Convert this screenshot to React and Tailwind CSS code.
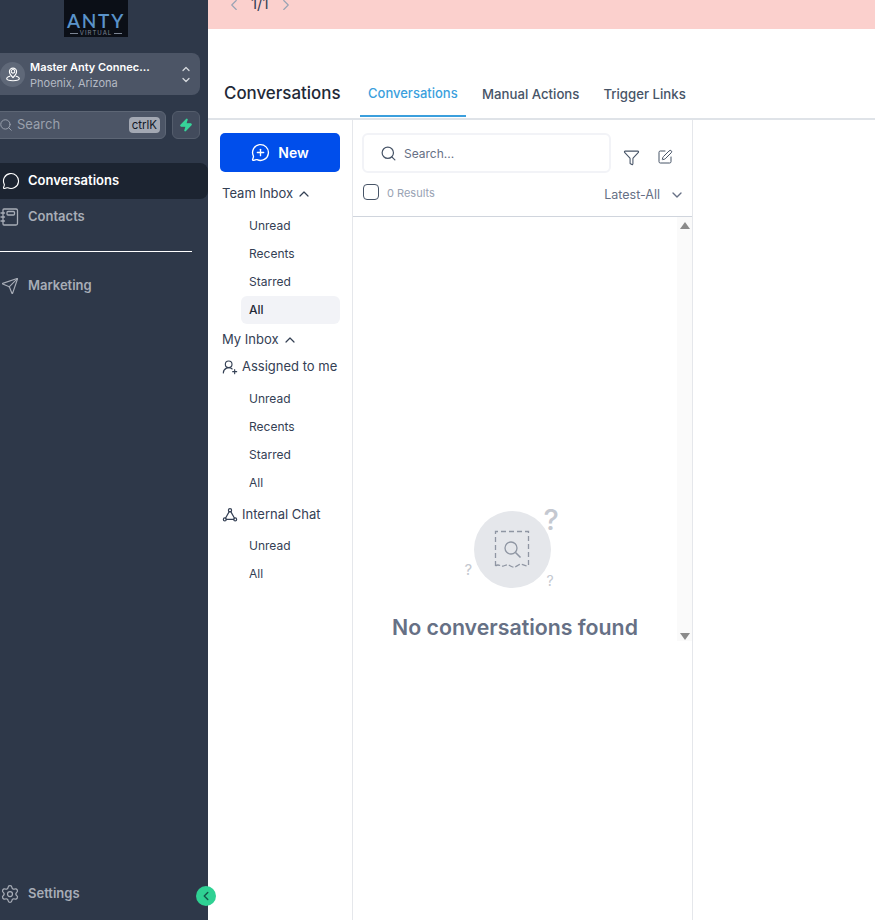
import { ChevronLeft, ChevronRight, ChevronUp, ChevronDown, Search, Zap, MessageCircle, Send, Settings, MessageCirclePlus, Funnel, SquarePen, UserRoundPlus } from 'lucide-react';

const ContactsIcon = ({ className }) => (
    <svg viewBox="0 0 20 20" fill="none" stroke="currentColor" strokeWidth="1.3" strokeLinecap="round" strokeLinejoin="round" className={className}>
        <path d="M4 2h12a1.500 1.500 0 0 1 1.500 1.500v13a1.500 1.500 0 0 1-1.500 1.500h-12a1 1 0 0 1-1-1v-14a1 1 0 0 1 1-1z" />
        <rect x="7" y="4.500" width="7.500" height="3.500" rx="1" />
        <path d="M1 6h3.500M1 10h3.500M1 14h3.500" />
    </svg>
);

const LocationIcon = ({ className }) => (
    <svg viewBox="0 0 20 20" fill="none" stroke="currentColor" strokeWidth="1.200" strokeLinecap="round" strokeLinejoin="round" className={className}>
        <circle cx="10" cy="7" r="2" />
        <path d="M10 14c-2-2-4-3.800-4-6.500a4 4 0 0 1 8 0c0 2.700-2 4.500-4 6.500z" />
        <path d="M6.500 12.500c-2 .5-3.500 1.400-3.500 2.500 0 1.400 3 2.500 7 2.500s7-1.100 7-2.500c0-1.100-1.500-2-3.500-2.500" />
    </svg>
);

const ChatNodesIcon = ({ className }) => (
    <svg viewBox="0 0 20 20" fill="none" stroke="currentColor" strokeWidth="1.500" strokeLinecap="round" strokeLinejoin="round" className={className}>
        <circle cx="10" cy="4" r="2" />
        <circle cx="3.500" cy="15.500" r="1.800" />
        <circle cx="16.500" cy="15.500" r="1.800" />
        <path d="M9 5.800 4.500 13.800M11 5.800l4.500 8M5.300 15.500h9.400" />
    </svg>
);

const EmptyIllustration = () => (
    <div className="relative w-[100px] h-[84px]">
        <div className="absolute left-[10px] top-[3px] w-[77px] h-[77px] rounded-full bg-[#e5e7eb]" />
        <svg viewBox="0 0 36 39" fill="none" className="absolute left-[30px] top-[22px] w-[36px] h-[39px] text-[#8f96a3]" stroke="currentColor" strokeWidth="1.300">
            <path d="M1.500 36V1.500h33V36" strokeDasharray="5 3" />
            <path d="M1.500 36c3-3 5 1 8 0s4-2 7 0 5 1 8-1 6 1 10 1" strokeDasharray="5 2" />
            <circle cx="17" cy="18" r="6" />
            <path d="m21.500 22.500 5 5" strokeWidth="1.600" />
        </svg>
        <span className="absolute left-[80px] -top-[3px] text-[29px] leading-none font-medium text-[#c4c8d0]">?</span>
        <span className="absolute left-[1px] top-[54px] text-[15px] leading-none text-[#c4c8d0]">?</span>
        <span className="absolute left-[83px] top-[66px] text-[14px] leading-none text-[#c4c8d0]">?</span>
    </div>
);

const SubItem = ({ label, active }) => (
    <div className={`ml-[33px] w-[99px] h-[28px] pl-[8px] flex items-center text-[12px] rounded-md ${active ? 'bg-[#f2f3f7] text-[#1f2937] font-medium' : 'text-[#344054]'}`}>
        {label}
    </div>
);

const Sidebar = () => (
    <aside className="relative w-[208px] shrink-0 h-[920px] bg-[#2e3849] flex flex-col">
        <div className="ml-[64px] w-[64px] h-[37px] bg-[#0b0f17] flex flex-col items-center overflow-hidden">
            <span className="mt-[11px] h-[19px] text-[19px] leading-[19px] font-semibold tracking-[1.800px] text-[#5a93c9]" style={{ fontFamily: 'Lato, sans-serif' }}>ANTY</span>
            <div className="flex items-center gap-[2px]">
                <span className="w-[8px] border-t border-[#7b8494]" />
                <span className="text-[6px] leading-[6px] tracking-[1px] text-[#7b8494]">VIRTUAL</span>
                <span className="w-[8px] border-t border-[#7b8494]" />
            </div>
        </div>
        <div className="mt-[16px] -ml-[8px] w-[208px] h-[42px] rounded-lg bg-[#4c5566] flex items-center pl-[8px]">
            <div className="w-[25px] h-[25px] rounded-full bg-[#5f6878] flex items-center justify-center">
                <LocationIcon className="w-[18px] h-[18px] text-white" />
            </div>
            <div className="ml-[5px] pt-[2px] flex-1 min-w-0">
                <div className="text-[11px] leading-[16px] font-semibold text-white">Master Anty Connec...</div>
                <div className="text-[11px] leading-[16px] text-[#b4bac4]">Phoenix, Arizona</div>
            </div>
            <div className="mr-[8px] flex flex-col text-[#d5d8dd]">
                <ChevronUp className="w-[12px] h-[12px] -mb-[1px]" strokeWidth={2.500} />
                <ChevronDown className="w-[12px] h-[12px]" strokeWidth={2.500} />
            </div>
        </div>
        <div className="mt-[16px] flex items-center">
            <div className="-ml-[8px] w-[174px] h-[28px] rounded-md bg-[#4c5566] border border-[#5d6675] flex items-center pl-[6px] pr-[5px]">
                <Search className="w-[14px] h-[14px] text-[#9aa1ad]" strokeWidth={1.700} />
                <span className="ml-[4px] flex-1 text-[13px] text-[#9aa1ad]">Search</span>
                <span className="h-[16px] px-[3px] rounded-sm bg-[#a3a8b3] text-[11.500px] leading-[16px] text-[#111827]">ctrlK</span>
            </div>
            <div className="ml-[6px] w-[28px] h-[28px] rounded-md bg-[#424b5c] border border-[#545d6c] flex items-center justify-center">
                <Zap className="w-[14px] h-[14px] text-[#37d399] fill-[#37d399]" />
            </div>
        </div>
        <div className="mt-[24px] -ml-[8px] w-[216px] h-[36px] rounded-lg bg-[#1c2431] flex items-center pl-[10px] font-semibold text-[13px] text-white">
            <MessageCircle className="w-[18px] h-[18px] mr-[8px]" strokeWidth={1.500} />
            {'Conversations'}
        </div>
        <div className="h-[36px] flex items-center font-semibold text-[13px] text-[#a8adb7]">
            <ContactsIcon className="w-[20px] h-[20px] shrink-0" />
            <span className="ml-[8px]">Contacts</span>
        </div>
        <div className="mt-[16px] w-[192px] border-t border-white" />
        <div className="mt-[16px] h-[36px] flex items-center font-semibold text-[13px] text-[#a8adb7]">
            <Send className="w-[18px] h-[18px] shrink-0 ml-[1px]" strokeWidth={1.500} />
            <span className="ml-[9px]">Marketing</span>
        </div>
        <div className="mt-auto mb-[8px] h-[36px] flex items-center font-semibold text-[13px] text-[#a8adb7]">
            <Settings className="w-[20px] h-[20px] shrink-0" strokeWidth={1.500} />
            <span className="ml-[8px]">Settings</span>
        </div>
        <div className="absolute left-[196px] top-[886px] w-[20px] h-[20px] rounded-full bg-[#2fd193] flex items-center justify-center text-[#14574a]">
            <ChevronLeft className="w-[14px] h-[14px]" strokeWidth={2.500} />
        </div>
    </aside>
);

const InboxNav = () => (
    <nav className="w-[145px] shrink-0 border-r border-[#e5e7eb] pt-[13px] text-[#344054]">
        <button className="ml-[12px] w-[120px] h-[39px] rounded-[5px] bg-[#004eeb] text-white flex items-center justify-center font-semibold text-[14px]">
            <MessageCirclePlus className="w-[19px] h-[19px] mr-[8px]" strokeWidth={1.700} />
            New
        </button>
        <div className="mt-[12px] ml-[14px] h-[20px] flex items-center text-[13px]">
            Team Inbox
            <ChevronUp className="w-[16px] h-[16px] ml-[3px]" strokeWidth={1.800} />
        </div>
        <div className="mt-[8px]">
            <SubItem label="Unread" />
            <SubItem label="Recents" />
            <SubItem label="Starred" />
            <SubItem label="All" active />
        </div>
        <div className="mt-[6px] ml-[14px] h-[20px] flex items-center text-[13px]">
            My Inbox
            <ChevronUp className="w-[16px] h-[16px] ml-[3px]" strokeWidth={1.800} />
        </div>
        <div className="mt-[7px] ml-[14px] h-[20px] flex items-center text-[13px]">
            <UserRoundPlus className="w-[16px] h-[16px] mr-[4px]" strokeWidth={1.700} />
            Assigned to me
        </div>
        <div className="mt-[8px]">
            <SubItem label="Unread" />
            <SubItem label="Recents" />
            <SubItem label="Starred" />
            <SubItem label="All" />
        </div>
        <div className="mt-[8px] ml-[14px] h-[20px] flex items-center text-[13px]">
            <ChatNodesIcon className="w-[16px] h-[16px] mr-[4px]" />
            Internal Chat
        </div>
        <div className="mt-[7px]">
            <SubItem label="Unread" />
            <SubItem label="All" />
        </div>
    </nav>
);

const ConversationList = () => (
    <section className="w-[340px] shrink-0 border-r border-[#e5e7eb] flex flex-col">
        <div className="h-[97px] border-b border-[#d0d5dd] pt-[13px] pl-[9px] shrink-0">
            <div className="flex items-start">
                <div className="w-[249px] h-[40px] rounded-md border-2 border-[#f2f3f7] flex items-center pl-[16px]">
                    <Search className="w-[17px] h-[17px] text-[#475467]" strokeWidth={1.700} />
                    <span className="ml-[7px] pt-[1px] text-[12px] text-[#667085]">Search...</span>
                </div>
                <Funnel className="ml-[12px] mt-[16px] w-[17px] h-[17px] text-[#475467]" strokeWidth={1.500} />
                <SquarePen className="ml-[17px] mt-[16px] w-[16px] h-[16px] text-[#475467]" strokeWidth={1.500} />
            </div>
            <div className="mt-[11px] ml-[1px] flex items-start">
                <span className="w-[16px] h-[16px] rounded-[4px] border border-[#475467]" />
                <span className="ml-[8px] mt-[1px] text-[11px] leading-[16px] text-[#98a2b3]">0 Results</span>
                <span className="ml-auto mt-[3px] text-[12.500px] leading-[16px] text-[#667085]">Latest-All</span>
                <ChevronDown className="ml-[9px] mr-[7px] mt-[3px] w-[16px] h-[16px] text-[#667085]" strokeWidth={2} />
            </div>
        </div>
        <div className="relative h-[424px] flex flex-col items-center shrink-0">
            <div className="absolute right-0 top-0 w-[15px] h-full bg-[#fafafa] flex flex-col items-center justify-between pt-[5px] pb-[1px]">
                <span className="w-0 h-0 border-x-[5px] border-x-transparent border-b-[7px] border-b-[#8b8b8b]" />
                <span className="w-0 h-0 border-x-[5px] border-x-transparent border-t-[7px] border-t-[#8b8b8b]" />
            </div>
            <div className="mt-[291px] ml-[-18px]">
                <EmptyIllustration />
            </div>
            <div className="mt-[21px] ml-[-15px] text-[21.300px] leading-[28px] font-semibold text-[#667085] whitespace-nowrap">
                No conversations found
            </div>
        </div>
    </section>
);

export default function App() {
    return (
        <div className="w-[875px] h-[920px] overflow-hidden flex bg-white" style={{ fontFamily: 'Inter, sans-serif' }}>
            <Sidebar />
            <main className="flex-1 min-w-0 flex flex-col">
                <div className="h-[29px] bg-[#fbd0cd] flex items-start pl-[17px] shrink-0">
                    <ChevronLeft className="w-[18px] h-[18px] -mt-[4px] text-[#98a2b3]" strokeWidth={1.500} />
                    <span className="-mt-[6px] ml-[8px] h-[20px] text-[15px] leading-[20px] text-[#344054]">1/1</span>
                    <ChevronRight className="w-[18px] h-[18px] -mt-[4px] ml-[8px] text-[#98a2b3]" strokeWidth={1.500} />
                </div>
                <div className="mt-[46px] h-[45px] shrink-0 border-b-2 border-[#dfe3e8] flex items-start pl-[16px]">
                    <h1 className="mt-[5px] w-[136px] text-[16.900px] leading-[26px] font-medium text-[#1f2937]">Conversations</h1>
                    <div className="w-[106px] h-[42px] border-b-2 border-[#3b9fdd] pl-[8px] pt-[8px] text-[13px] leading-[20px] font-medium text-[#3b9fdd]">Conversations</div>
                    <div className="ml-[16px] mt-[9px] text-[13.200px] leading-[20px] font-medium text-[#475467]">Manual Actions</div>
                    <div className="ml-[24px] mt-[9px] text-[13.200px] leading-[20px] font-medium text-[#475467]">Trigger Links</div>
                </div>
                <div className="flex flex-1 min-h-0">
                    <InboxNav />
                    <ConversationList />
                </div>
            </main>
        </div>
    );
}
